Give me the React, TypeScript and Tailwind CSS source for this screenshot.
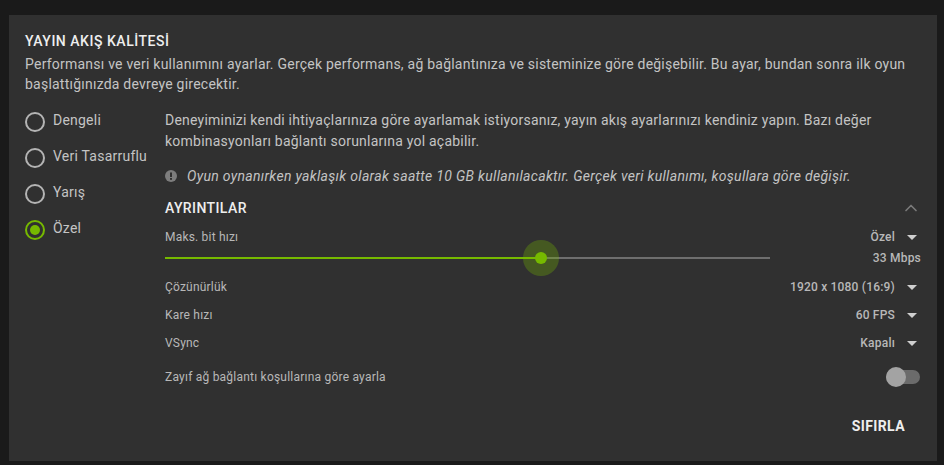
import { ChevronUp } from 'lucide-react';

const modes = [
  { label: 'Dengeli', selected: false },
  { label: 'Veri Tasarruflu', selected: false },
  { label: 'Yarış', selected: false },
  { label: 'Özel', selected: true },
];

function Caret() {
  return <span className="ml-[12px] h-0 w-0 border-x-[5px] border-t-[5px] border-x-transparent border-t-[#cfcfcf]" />;
}

function SettingRow({ label, value }: { label: string; value: string }) {
  return (
    <div className="flex h-[28px] items-center justify-between pr-[4px] text-[12px] tracking-[0.2px] text-[#b8b8b8]">
      <span>{label}</span>
      <span className="flex items-center font-medium">
        {value}
        <Caret />
      </span>
    </div>
  );
}

export default function App() {
  return (
    <div className="h-[465px] w-[944px] overflow-hidden bg-[#1a1a1a] pl-[9px] pt-[15px] font-['Roboto',sans-serif]">
      <div className="h-[446px] w-[928px] bg-[#303030] px-[16px] pt-[16px]">
        <h1 className="text-[14px] leading-[20px] font-medium tracking-[0.52px] text-[#eeeeee]">YAYIN AKIŞ KALİTESİ</h1>
        <p className="mt-[3px] text-[14px] leading-[20px] tracking-[0.23px] text-[#c4c4c4]">
          Performansı ve veri kullanımını ayarlar. Gerçek performans, ağ bağlantınıza ve sisteminize göre değişebilir. Bu ayar, bundan sonra ilk oyun başlattığınızda devreye girecektir.
        </p>

        <div className="mt-[16px] flex">
          {/* Modes */}
          <div className="w-[140px] shrink-0 pt-[2px]">
            {modes.map((mode) => (
              <div key={mode.label} className="flex h-[36px] items-start text-[14px] leading-[16px] tracking-[0.23px] text-[#c4c4c4]">
                <span
                  className={`flex h-[20px] w-[20px] items-center justify-center rounded-full border-2 ${
                    mode.selected ? 'border-[#76b900]' : 'border-[#b4b4b4]'
                  }`}
                >
                  {mode.selected && <span className="h-[10px] w-[10px] rounded-full bg-[#76b900]" />}
                </span>
                <span className="ml-[8px]">{mode.label}</span>
              </div>
            ))}
          </div>

          {/* Custom settings */}
          <div className="min-w-0 flex-1">
            <p className="text-[14px] leading-[21px] tracking-[0.23px] text-[#c4c4c4]">
              Deneyiminizi kendi ihtiyaçlarınıza göre ayarlamak istiyorsanız, yayın akış ayarlarınızı kendiniz yapın. Bazı değer kombinasyonları bağlantı sorunlarına yol açabilir.
            </p>
            <div className="mt-[14px] flex items-center text-[14px] leading-[20px] tracking-[0.31px] text-[#c4c4c4] italic">
              <svg viewBox="0 0 12 12" className="mr-[10px] h-[12px] w-[12px] shrink-0">
                <circle cx="6" cy="6" r="6" fill="#7d7d7d" />
                <rect x="5" y="2.5" width="2" height="4.5" fill="#303030" />
                <rect x="5" y="8" width="2" height="1.8" fill="#303030" />
              </svg>
              Oyun oynanırken yaklaşık olarak saatte 10 GB kullanılacaktır. Gerçek veri kullanımı, koşullara göre değişir.
            </div>

            <div className="mt-[12px] flex h-[20px] items-center justify-between">
              <h2 className="text-[14px] font-medium tracking-[0.4px] text-[#eeeeee]">AYRINTILAR</h2>
              <ChevronUp className="h-[20px] w-[20px] text-[#7a7a7a]" strokeWidth={2} />
            </div>

            <div className="mt-[9px] flex h-[20px] items-center justify-between pr-[4px] text-[12px] tracking-[0.2px] text-[#b8b8b8]">
              <span>Maks. bit hızı</span>
              <span className="flex items-center font-medium">
                Özel
                <Caret />
              </span>
            </div>

            <div className="flex h-[22px] items-center justify-between">
              <div className="relative flex h-[2px] w-[605px] bg-[#6e6e6e]">
                <div className="h-full w-[376px] bg-[#76b900]" />
                <span className="absolute left-[358px] top-[-17px] flex h-[36px] w-[36px] items-center justify-center rounded-full bg-[#76b900]/30">
                  <span className="h-[12px] w-[12px] rounded-full bg-[#76b900]" />
                </span>
              </div>
              <span className="text-[12px] font-medium tracking-[0.2px] text-[#b8b8b8]">33 Mbps</span>
            </div>

            <div className="mt-[4px]">
              <SettingRow label="Çözünürlük" value="1920 x 1080 (16:9)" />
              <SettingRow label="Kare hızı" value="60 FPS" />
              <SettingRow label="VSync" value="Kapalı" />
            </div>

            <div className="mt-[10px] flex h-[20px] items-center justify-between text-[12px] tracking-[0.22px] text-[#b8b8b8]">
              <span>Zayıf ağ bağlantı koşullarına göre ayarla</span>
              <span className="relative mr-[1px] h-[14px] w-[34px] rounded-full bg-[#6b6b6b]">
                <span className="absolute left-0 top-[-3px] h-[20px] w-[20px] rounded-full bg-[#a3a3a3]" />
              </span>
            </div>

            <div className="mt-[29px] flex justify-end pr-[16px]">
              <span className="text-[14px] leading-[20px] font-bold tracking-[0.4px] text-[#eeeeee]">SIFIRLA</span>
            </div>
          </div>
        </div>
      </div>
    </div>
  );
}
